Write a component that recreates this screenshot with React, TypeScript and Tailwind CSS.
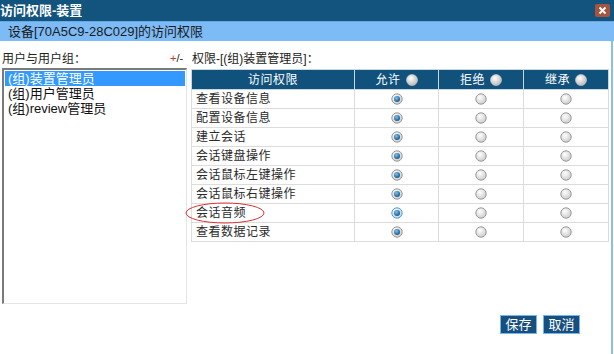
import React from 'react';

const FONT = { fontFamily: '"Liberation Sans", "Noto Sans CJK SC", sans-serif' };

const PERMS = [
  '查看设备信息',
  '配置设备信息',
  '建立会话',
  '会话键盘操作',
  '会话鼠标左键操作',
  '会话鼠标右键操作',
  '会话音频',
  '查看数据记录',
];

const GROUPS = ['(组)装置管理员', '(组)用户管理员', '(组)review管理员'];

const Radio = ({ checked, focus }: { checked?: boolean; focus?: boolean }) => (
  <svg width="12" height="12" viewBox="0 0 12 12" className="inline-block">
    <defs>
      <radialGradient id="ring" cx="40%" cy="35%" r="70%">
        <stop offset="0%" stopColor="#ffffff" />
        <stop offset="100%" stopColor="#c9c9c9" />
      </radialGradient>
      <radialGradient id="dot" cx="40%" cy="35%" r="70%">
        <stop offset="0%" stopColor="#7fc4f0" />
        <stop offset="100%" stopColor="#0b4f86" />
      </radialGradient>
    </defs>
    <circle cx="6" cy="6" r="5.2" fill="url(#ring)" stroke={focus ? '#4aa3e8' : '#9a9a9a'} strokeWidth="1" />
    {checked && <circle cx="6" cy="6" r="3" fill="url(#dot)" />}
  </svg>
);

const HeadRadio = () => (
  <svg width="12" height="12" viewBox="0 0 12 12" className="inline-block">
    <defs>
      <radialGradient id="hr" cx="40%" cy="35%" r="70%">
        <stop offset="0%" stopColor="#ffffff" />
        <stop offset="100%" stopColor="#b5b5b5" />
      </radialGradient>
    </defs>
    <circle cx="6" cy="6" r="5.5" fill="url(#hr)" stroke="#d0d0d0" strokeWidth="0.6" />
  </svg>
);

export default function App() {
  return (
    <div className="w-[614px] h-[354px] bg-white flex flex-col overflow-hidden relative text-[#222]" style={FONT}>
      {/* title bar */}
      <div className="h-[21px] bg-[#13547f] flex items-center justify-between shrink-0">
        <span className="text-white font-bold text-[13px] leading-none">访问权限-装置</span>
        <div className="w-[15px] h-[13px] mr-[4px] bg-[#a5543d] rounded-[2px] flex items-center justify-center">
          <svg width="9" height="9" viewBox="0 0 9 9">
            <path d="M1.5 1.5 L7.5 7.5 M7.5 1.5 L1.5 7.5" stroke="#ffffff" strokeWidth="2" />
          </svg>
        </div>
      </div>
      <div className="h-[20px] bg-[#7dbbf6] flex items-center pl-[8px] text-[13px] text-[#1a1a1a] shrink-0 border-t border-[#6aa8e4]">
        设备[70A5C9-28C029]的访问权限
      </div>

      {/* body */}
      <div className="flex-1 flex flex-col mr-[1px] border-r-[2px] border-[#8cbcf0]">
        <div className="h-[19px] mt-[8px] flex items-center text-[12px] leading-none">
          <span className="pl-[2px] w-[170px]">用户与用户组：</span>
          <span className="w-[22px] text-[11px]"><span className="text-[#c0392b]">+</span>/-</span>
          <span>权限-[(组)装置管理员]：</span>
        </div>
        <div className="flex">
          <div className="ml-[2px] w-[185px] h-[236px] border-t-[2px] border-l-[2px] border-t-[#7a7a7a] border-l-[#7a7a7a] border-r border-b border-r-[#e4e4e4] border-b-[#e4e4e4] pt-[1px] px-[1px] text-[13px] leading-[15px]">
            {GROUPS.map((g, i) => (
              <div key={g} className={`pl-[3px] h-[15px] ${i === 0 ? 'bg-[#3399ff] text-white' : 'text-[#111]'}`}>
                {g}
              </div>
            ))}
          </div>
          <div className="ml-[4px] mt-[1px]">
            <table className="border-collapse text-[12px] tracking-[0.5px]">
              <thead>
                <tr className="h-[20px] bg-[#11527d] text-white">
                  <th className="w-[163px] font-normal border border-[#c7d6e2]">访问权限</th>
                  <th className="w-[84px] font-normal border border-[#c7d6e2]">
                    <span className="inline-flex items-center gap-[5px]">允许<HeadRadio /></span>
                  </th>
                  <th className="w-[85px] font-normal border border-[#c7d6e2]">
                    <span className="inline-flex items-center gap-[5px]">拒绝<HeadRadio /></span>
                  </th>
                  <th className="w-[85px] font-normal border border-[#c7d6e2]">
                    <span className="inline-flex items-center gap-[5px]">继承<HeadRadio /></span>
                  </th>
                </tr>
              </thead>
              <tbody>
                {PERMS.map((p, i) => (
                  <tr key={p} className="h-[19px]">
                    <td className="border border-[#dcdcdc] pl-[4px] text-[#2a2a2a] leading-none">{p}</td>
                    <td className="border border-[#dcdcdc] text-center leading-none">
                      <Radio checked focus={i === 6} />
                    </td>
                    <td className="border border-[#dcdcdc] text-center leading-none">
                      <Radio />
                    </td>
                    <td className="border border-[#dcdcdc] text-center leading-none">
                      <Radio />
                    </td>
                  </tr>
                ))}
              </tbody>
            </table>
          </div>
        </div>
        <div className="flex justify-end gap-[6px] mt-[11px] pr-[31px]">
          <button className="w-[37px] h-[19px] bg-[#17507f] border border-[#74b6f0] text-white text-[13px] leading-none">保存</button>
          <button className="w-[37px] h-[19px] bg-[#17507f] border border-[#74b6f0] text-white text-[13px] leading-none">取消</button>
        </div>
      </div>

      {/* annotation ellipse */}
      <svg className="absolute left-[184px] top-[201px]" width="82" height="24" viewBox="0 0 82 24">
        <ellipse cx="41" cy="12" rx="39" ry="10" fill="none" stroke="#e03030" strokeWidth="1" />
      </svg>
    </div>
  );
}
